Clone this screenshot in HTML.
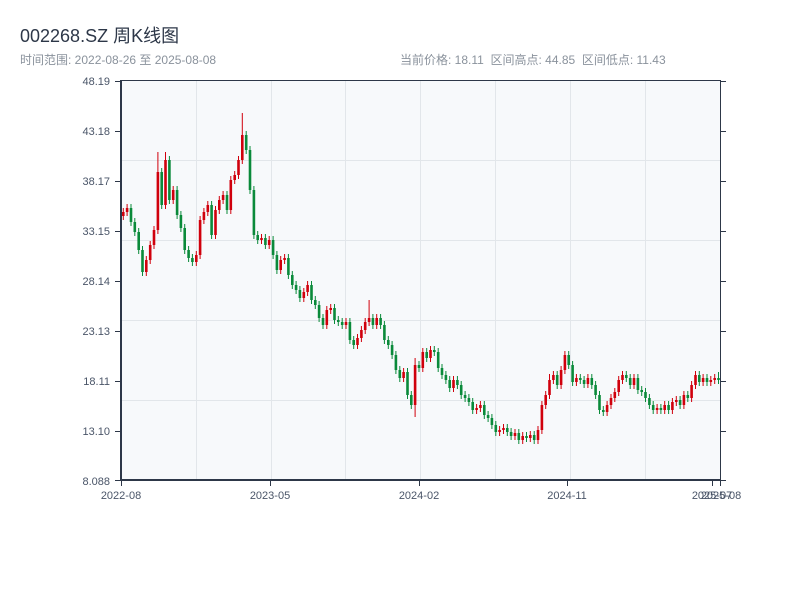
<!DOCTYPE html>
<html><head><meta charset="utf-8"><style>
body{margin:0;background:#fff;width:800px;height:600px;overflow:hidden;font-family:"Liberation Sans","Noto Sans CJK SC",sans-serif;}
.t{position:absolute;left:20px;top:22px;font-size:18px;color:#2d3748;}
.s{position:absolute;top:51px;font-size:12px;color:#8a929c;}
svg{position:absolute;left:0;top:0}
</style></head><body>
<div class="t">002268.SZ 周K线图</div>
<div class="s" style="left:20px">时间范围: 2022-08-26 至 2025-08-08</div>
<div class="s" style="left:400px">当前价格: 18.11 &nbsp;区间高点: 44.85 &nbsp;区间低点: 11.43</div>
<svg width="800" height="600" xmlns="http://www.w3.org/2000/svg">
<rect x="121" y="81" width="599" height="399" fill="#f7f9fb"/>
<g stroke="#e2e6ea" stroke-width="1">
<line x1="121" y1="160.5" x2="720" y2="160.5"/><line x1="121" y1="240.5" x2="720" y2="240.5"/>
<line x1="121" y1="320.5" x2="720" y2="320.5"/><line x1="121" y1="400.5" x2="720" y2="400.5"/>
<line x1="196.5" y1="81" x2="196.5" y2="480"/><line x1="271.5" y1="81" x2="271.5" y2="480"/>
<line x1="345.5" y1="81" x2="345.5" y2="480"/><line x1="420.5" y1="81" x2="420.5" y2="480"/>
<line x1="495.5" y1="81" x2="495.5" y2="480"/><line x1="570.5" y1="81" x2="570.5" y2="480"/>
<line x1="645.5" y1="81" x2="645.5" y2="480"/>
</g>
<g fill="none">
<path stroke="#d0000c" stroke-width="1" d="M123.3 208V220M127.1 204V216M146.3 256V276M150.2 241V264M154.0 226V249M157.9 152V234M165.5 152V209M173.2 186V204M196.3 251V266M200.1 216V259M203.9 208V224M207.8 201V216M215.5 206V239M219.3 196V214M223.1 191V204M230.8 176V214M234.7 171V184M238.5 156V179M242.3 113V164M261.5 234V244M269.2 236V249M280.7 256V274M284.6 254V264M303.8 288V302M307.6 281V296M326.8 306V329M330.7 304V314M346.0 318V329M357.5 334V349M361.4 326V342M365.2 318V334M369.1 300V326M376.7 314V329M403.6 368V382M415.1 358V417M422.8 348V372M430.5 346V362M453.5 376V392M476.6 404V414M480.4 401V412M499.6 426V436M503.5 424V434M515.0 429V440M522.7 432V444M530.3 431V442M538.0 426V444M541.9 401V434M545.7 391V409M549.5 374V399M553.4 371V384M561.1 366V389M564.9 351V374M576.4 374V386M587.9 374V388M607.1 401V416M611.0 394V409M614.8 388V402M618.7 376V396M622.5 371V384M634.0 374V389M657.1 404V414M664.7 401V414M672.4 398V414M676.3 396V406M683.9 391V409M691.6 381V402M695.5 371V389M703.1 374V386M710.8 376V386M714.7 374V384"/>
<path stroke="#d0000c" stroke-width="2.6" d="M123.3 212V216M127.1 208V212M146.3 260V272M150.2 245V260M154.0 230V245M157.9 172V230M165.5 160V205M173.2 190V200M196.3 255V262M200.1 220V255M203.9 212V220M207.8 205V212M215.5 210V235M219.3 200V210M223.1 195V200M230.8 180V210M234.7 175V180M238.5 160V175M242.3 135V160M261.5 238V240M269.2 240V245M280.7 260V270M284.6 258V260M303.8 292V298M307.6 285V292M326.8 310V325M330.7 308V310M346.0 322V325M357.5 338V345M361.4 330V338M365.2 322V330M369.1 318V322M376.7 318V325M403.6 372V378M415.1 365V405M422.8 352V368M430.5 350V358M453.5 380V388M476.6 408V410M480.4 405V408M499.6 430V432M503.5 428V430M515.0 433V436M522.7 436V440M530.3 435V438M538.0 430V440M541.9 405V430M545.7 395V405M549.5 380V395M553.4 375V380M561.1 370V385M564.9 355V370M576.4 378V382M587.9 378V384M607.1 405V412M611.0 398V405M614.8 392V398M618.7 380V392M622.5 375V380M634.0 378V385M657.1 408V410M664.7 405V410M672.4 402V410M676.3 400V402M683.9 395V405M691.6 385V398M695.5 375V385M703.1 378V382M710.8 380V382M714.7 378V380"/>
<path stroke="#0a8a3a" stroke-width="1" d="M131.0 204V226M134.8 218V236M138.7 228V254M142.5 246V276M161.7 168V209M169.4 156V204M177.1 186V219M180.9 211V232M184.7 224V254M188.6 246V262M192.4 254V266M211.6 201V239M227.0 191V214M246.2 131V154M250.0 146V194M253.9 186V239M257.7 231V244M265.4 234V249M273.1 236V259M276.9 251V274M288.4 254V279M292.3 271V289M296.1 281V294M299.9 286V302M311.5 281V304M315.3 296V309M319.1 301V322M323.0 314V329M334.5 304V324M338.3 316V326M342.2 318V329M349.9 318V344M353.7 336V349M372.9 314V329M380.6 314V329M384.4 321V344M388.3 336V349M392.1 341V359M395.9 351V374M399.8 366V382M407.5 368V399M411.3 391V409M419.0 361V372M426.7 348V362M434.3 346V356M438.2 348V372M442.0 364V379M445.9 371V384M449.7 376V392M457.4 376V389M461.2 381V399M465.1 391V402M468.9 394V406M472.7 398V414M484.3 401V419M488.1 411V422M491.9 414V429M495.8 421V436M507.3 424V436M511.1 428V440M518.8 429V444M526.5 432V442M534.2 431V444M557.2 371V389M568.7 351V369M572.6 361V386M580.3 374V384M584.1 376V388M591.8 374V389M595.6 381V399M599.5 391V414M603.3 406V416M626.3 371V382M630.2 374V389M637.9 374V394M641.7 386V396M645.5 388V402M649.4 394V409M653.2 401V414M660.9 404V414M668.6 401V414M680.1 396V409M687.8 391V402M699.3 371V386M707.0 374V386M718.5 372V384"/>
<path stroke="#0a8a3a" stroke-width="2.6" d="M131.0 208V222M134.8 222V232M138.7 232V250M142.5 250V272M161.7 172V205M169.4 160V200M177.1 190V215M180.9 215V228M184.7 228V250M188.6 250V258M192.4 258V262M211.6 205V235M227.0 195V210M246.2 135V150M250.0 150V190M253.9 190V235M257.7 235V240M265.4 238V245M273.1 240V255M276.9 255V270M288.4 258V275M292.3 275V285M296.1 285V290M299.9 290V298M311.5 285V300M315.3 300V305M319.1 305V318M323.0 318V325M334.5 308V320M338.3 320V322M342.2 322V325M349.9 322V340M353.7 340V345M372.9 318V325M380.6 318V325M384.4 325V340M388.3 340V345M392.1 345V355M395.9 355V370M399.8 370V378M407.5 372V395M411.3 395V405M419.0 365V368M426.7 352V358M434.3 350V352M438.2 352V368M442.0 368V375M445.9 375V380M449.7 380V388M457.4 380V385M461.2 385V395M465.1 395V398M468.9 398V402M472.7 402V410M484.3 405V415M488.1 415V418M491.9 418V425M495.8 425V432M507.3 428V432M511.1 432V436M518.8 433V440M526.5 436V438M534.2 435V440M557.2 375V385M568.7 355V365M572.6 365V382M580.3 378V380M584.1 380V384M591.8 378V385M595.6 385V395M599.5 395V410M603.3 410V412M626.3 375V378M630.2 378V385M637.9 378V390M641.7 390V392M645.5 392V398M649.4 398V405M653.2 405V410M660.9 408V410M668.6 405V410M680.1 400V405M687.8 395V398M699.3 375V382M707.0 378V382M718.5 378V380"/>
</g>
<g stroke="#2d3748" fill="none">
<line x1="121" y1="80.5" x2="720" y2="80.5" stroke-width="1"/>
<line x1="121" y1="80" x2="121" y2="481" stroke-width="2"/>
<line x1="120" y1="480" x2="721" y2="480" stroke-width="2"/>
<line x1="720.5" y1="80" x2="720.5" y2="481" stroke-width="1"/>
<g stroke-width="1">
<line x1="115" y1="81.5" x2="121" y2="81.5"/><line x1="115" y1="131.5" x2="121" y2="131.5"/>
<line x1="115" y1="181.5" x2="121" y2="181.5"/><line x1="115" y1="231.5" x2="121" y2="231.5"/>
<line x1="115" y1="281.5" x2="121" y2="281.5"/><line x1="115" y1="331.5" x2="121" y2="331.5"/>
<line x1="115" y1="381.5" x2="121" y2="381.5"/><line x1="115" y1="431.5" x2="121" y2="431.5"/>
<line x1="115" y1="480.5" x2="121" y2="480.5"/>
<line x1="720" y1="81.5" x2="726" y2="81.5"/><line x1="720" y1="131.5" x2="726" y2="131.5"/>
<line x1="720" y1="181.5" x2="726" y2="181.5"/><line x1="720" y1="231.5" x2="726" y2="231.5"/>
<line x1="720" y1="281.5" x2="726" y2="281.5"/><line x1="720" y1="331.5" x2="726" y2="331.5"/>
<line x1="720" y1="381.5" x2="726" y2="381.5"/><line x1="720" y1="431.5" x2="726" y2="431.5"/>
<line x1="720" y1="480.5" x2="726" y2="480.5"/>
<line x1="121.5" y1="480" x2="121.5" y2="486"/><line x1="270.5" y1="480" x2="270.5" y2="486"/>
<line x1="419.5" y1="480" x2="419.5" y2="486"/><line x1="567.5" y1="480" x2="567.5" y2="486"/>
<line x1="712.5" y1="480" x2="712.5" y2="486"/><line x1="720.5" y1="480" x2="720.5" y2="486"/>
</g></g>
<g font-family="Liberation Sans,sans-serif" font-size="11" fill="#4a5568" text-anchor="end">
<text x="110" y="85">48.19</text><text x="110" y="135">43.18</text><text x="110" y="185">38.17</text>
<text x="110" y="235">33.15</text><text x="110" y="285">28.14</text><text x="110" y="335">23.13</text>
<text x="110" y="385">18.11</text><text x="110" y="435">13.10</text><text x="110" y="485">8.088</text>
</g>
<g font-family="Liberation Sans,sans-serif" font-size="11" fill="#4a5568" text-anchor="middle">
<text x="121" y="499">2022-08</text><text x="270" y="499">2023-05</text><text x="419" y="499">2024-02</text>
<text x="567" y="499">2024-11</text><text x="712" y="499">2025-07</text><text x="721" y="499">2025-08</text>
</g>
</svg>
</body></html>
